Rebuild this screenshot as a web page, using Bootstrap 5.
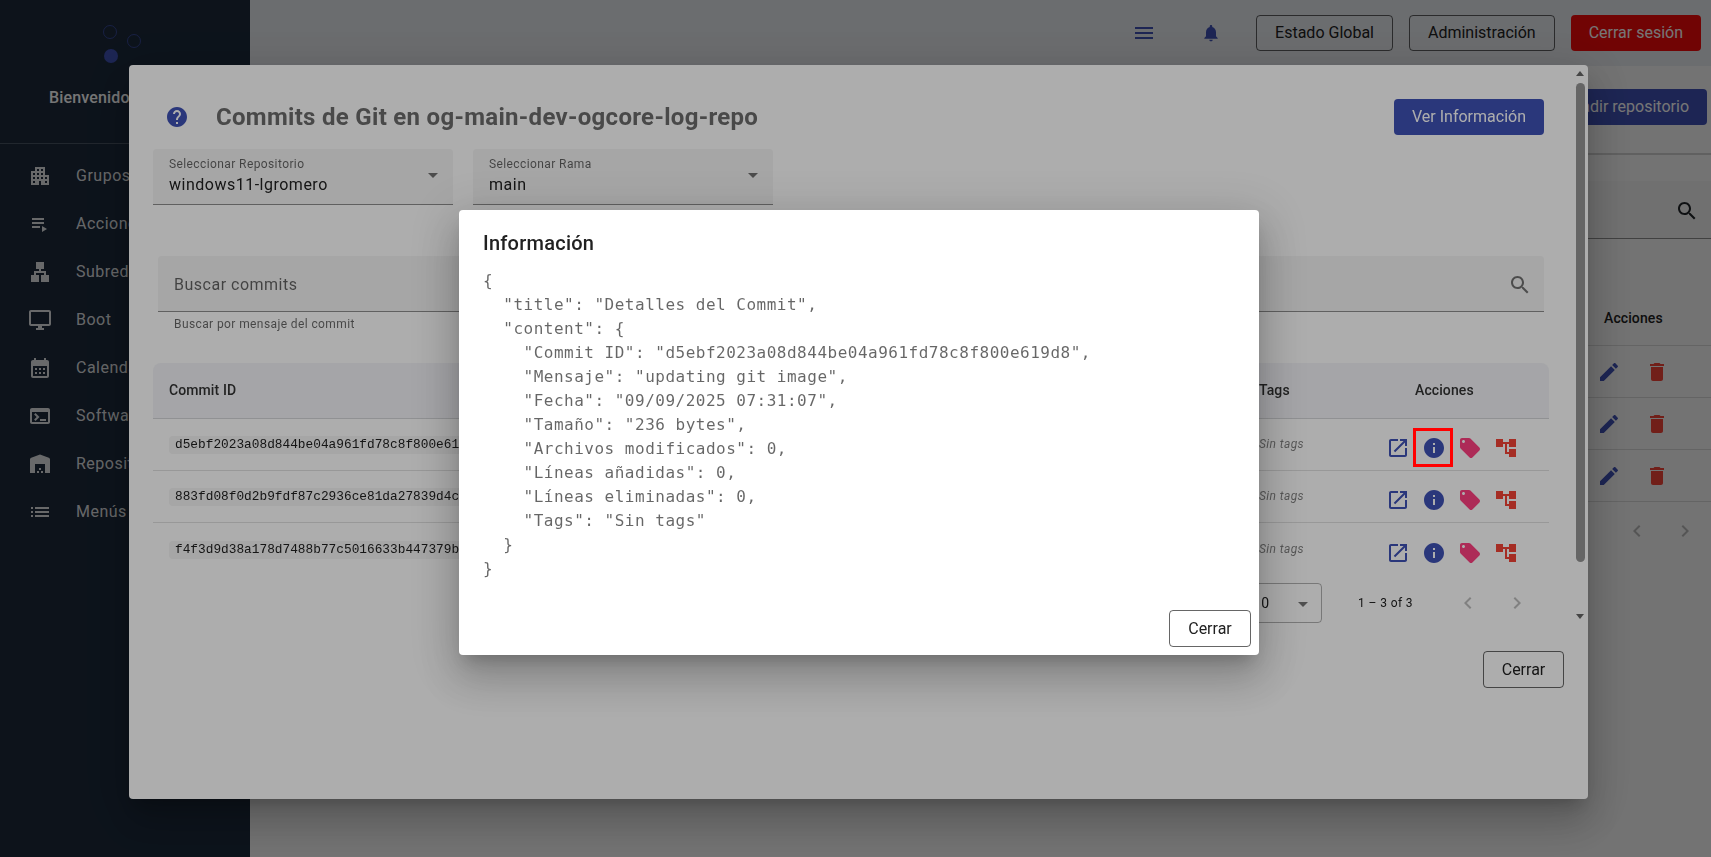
<!DOCTYPE html>
<html lang="es">
<head>
<meta charset="utf-8">
<title>Commits de Git</title>
<link href="https://cdn.jsdelivr.net/npm/bootstrap@5.3.0/dist/css/bootstrap.min.css" rel="stylesheet">
<style>
html,body{height:100%;overflow:hidden}
body{font-family:Roboto,"Liberation Sans",sans-serif;font-size:16px;letter-spacing:.5px;background:#f8f8f8;color:#212121}
.ico{width:24px;height:24px;fill:currentColor;flex:none;display:block}
.c-blue{color:#3f51b5}.c-pink{color:#ff4081}.c-red{color:#f44336}.c-mute{color:#00000042}.c-dim{color:#0000008a}
.shell{height:857px}
.side{width:250px;background:#1c2a3c;color:#fff;flex:none;overflow:hidden}
.side-head{height:144px;border-bottom:1px solid #ffffff33;position:relative;flex:none}
.logo{position:absolute;left:100px;top:22px}
.hello{position:absolute;left:49px;top:86px;font-weight:500;white-space:nowrap;font-size:16px;letter-spacing:.15px}
.side-item{height:48px;padding-left:28px;gap:24px;white-space:nowrap;color:#ffffffde}
.side-list{padding-top:8px}
.main-pane{min-width:0}
.topbar{height:66px;background:#e8ebf0;padding-right:10px;gap:16px}
.ico-menu{margin-right:29px}
.ico-bell{width:20px;height:20px;margin-right:19px}
.btn-m{font-size:16px;letter-spacing:0;height:36px;padding:0 18px;border-radius:4px;line-height:34px}
.btn-line{border:1px solid #00000099;color:#212121;background:transparent}
.btn-prim{background:#3f51b5;color:#fff;border:0}
.btn-danger-m{background:#f50a0a;color:#fff;border:0}
.bg-head{height:89px;border-bottom:2px solid #00000029;padding:0 4px 5px 0}
.bg-search{height:58px;margin-top:26px;border-bottom:1px solid #0000006b;background:#f3f3f3;padding:2px 12px 0 0}
.bg-table{margin-top:55px}
.bg-row{height:52px;border-bottom:1px solid #0000001f;padding-left:1347px}
.bg-head-row{font-weight:500;font-size:14px;letter-spacing:.1px;padding:0 0 2px 1354px}
.bg-act{width:72px;gap:24px}
.bg-pager{padding:17px 0 0 1375px;gap:24px}
.over1{z-index:1000;--bs-backdrop-opacity:.32;--bs-backdrop-bg:#000}
.over2{z-index:1020;--bs-backdrop-opacity:.32;--bs-backdrop-bg:#000}
.dlg{position:fixed;background:#fff;border-radius:4px;box-shadow:0 11px 15px -7px #0003,0 24px 38px 3px #00000024,0 9px 46px 8px #0000001f}
.dlg-commits{left:129px;top:65px;width:1459px;height:734px;z-index:1010}
.scroller{height:560px;overflow:hidden;padding:34px 44px 58px 24px}
.sb-track{position:absolute;right:0;top:0;width:15px;height:560px}
.sb-up,.sb-down{position:absolute;left:3px;border:4.500px solid transparent;border-top:0;border-bottom:5px solid #666}
.sb-up{top:6px}
.sb-down{top:549px;transform:rotate(180deg)}
.sb-thumb{position:absolute;left:3px;top:18px;width:9px;height:479px;border-radius:5px;background:#969696}
.ttl{font-size:24px;font-weight:700;letter-spacing:.3px;color:#6c6c6c;line-height:36px}
.ttl-ico{margin:0 27px 0 12px}
.selects{gap:20px;margin-top:14px}
.fake-sel{width:300px;height:56px;background:#f5f5f5;border-bottom:1px solid #0000006b;border-radius:4px 4px 0 0;padding:0 16px;position:relative}
.fake-sel label{font-size:12px;display:block;color:#0009;line-height:14px;padding-top:8px;letter-spacing:.4px}
.fake-sel div{line-height:24px;margin-top:2px}
.caret{position:absolute;right:15px;top:24px;border:5px solid transparent;border-top-color:#0000008a;border-bottom:0}
.search-wrap{margin:51px 0 0 5px}
.search-box{height:56px;background:#f5f5f5;border-bottom:1px solid #0000006b;border-radius:4px 4px 0 0;padding:2px 12px 0 16px}
.search-box input{border:0;outline:0;background:transparent;flex:1;padding:0;font-size:16px;letter-spacing:.5px;box-shadow:none}
.search-box input::placeholder{color:#0009;opacity:1}
.hint{font-size:12px;color:#0009;padding:5px 16px 0;line-height:15px;letter-spacing:.4px}
.tbl{table-layout:fixed;width:1396px;max-width:1396px;margin:31px 0 0;--bs-table-bg:transparent;border-collapse:separate;border-spacing:0}
.w1{width:352px}.w2{width:355px}.w3{width:190px}.w4{width:193px}.w5{width:130px}.w6{width:176px}
.tbl th{height:56px;background:#f3f4f8;font-size:14px;font-weight:500;letter-spacing:.1px;color:#333;vertical-align:middle;padding:0 16px 1px;border-bottom:1px solid #0000001f}
.tbl th:first-child{border-top-left-radius:8px}
.tbl th:last-child{border-top-right-radius:8px;padding-left:42px}
.tbl td{height:52px;padding:0 16px 2px;vertical-align:middle;font-size:14px;white-space:nowrap;border-bottom:1px solid #0000001f;letter-spacing:.1px}
.tbl tr:last-child td{border-bottom:0;height:53px}
.hash{font-family:"Liberation Mono",monospace;font-size:12.8px;letter-spacing:0;background:#f5f5f5;padding:0 6px;border-radius:4px;line-height:18px;display:inline-block;color:#212121}
.notags{font-size:12px;font-style:italic;color:#00000080;letter-spacing:.4px}
.act-cell{padding-left:7px!important}
.act-row{margin-top:8px}
.act-btn{width:36px;justify-content:center;display:flex}
.pager{height:40px;margin-top:7px;font-size:12px;padding-right:15px;letter-spacing:.4px}
.pg-sel{width:120px;height:40px;border:1px solid #0000004d;border-radius:4px;font-size:14px;position:relative;margin-right:36px}
.pg-sel span{position:absolute;left:50px}
.pg-sel .caret{right:13px;top:18px}
.pg-count{margin-right:43px}
.pg-nav{gap:25px}
.d1-foot{padding:26px 24px 0 0}
.btn-close-m{height:37px;width:81px;padding:0}
.over-top{position:fixed;z-index:1040}
.dlg-info{left:459px;top:210px;width:800px;height:445px;z-index:1030;padding:17px 8px 8px 24px}
.info-t{font-size:20px;font-weight:500;letter-spacing:.25px;line-height:32px;color:#212121;margin:0}
.info-pre{font-family:"DejaVu Sans Mono",monospace;font-size:16px;line-height:24px;letter-spacing:.5px;color:#0009;margin:10px 0 0;overflow:hidden;height:312px}
.info-foot{margin-top:29px}
.btn-close-i{height:37px;width:82px;padding:0}
.annot{left:1413px;top:428px;width:40px;height:39px;border:3px solid #f00}
</style>
</head>
<body>
<svg width="0" height="0" class="position-absolute">
<symbol id="i-apt" viewBox="0 0 24 24"><path d="M17 11V3H7v4H3v14h8v-4h2v4h8V11h-4zM7 19H5v-2h2v2zm0-4H5v-2h2v2zm0-4H5V9h2v2zm4 4H9v-2h2v2zm0-4H9V9h2v2zm0-4H9V5h2v2zm4 8h-2v-2h2v2zm0-4h-2V9h2v2zm0-4h-2V5h2v2zm4 12h-2v-2h2v2zm0-4h-2v-2h2v2z"/></symbol>
<symbol id="i-play" viewBox="0 0 24 24"><path d="M4 10h12v2H4zm0-4h12v2H4zm0 8h8v2H4zm10 0v6l5-3z"/></symbol>
<symbol id="i-lan" viewBox="0 0 24 24"><path d="M13 22h8v-7h-3v-4h-5V9h3V2H8v7h3v2H6v4H3v7h8v-7H8v-2h8v2h-3z"/></symbol>
<symbol id="i-desk" viewBox="0 0 24 24"><path d="M21 2H3c-1.1 0-2 .9-2 2v12c0 1.1.9 2 2 2h7v2H8v2h8v-2h-2v-2h7c1.1 0 2-.9 2-2V4c0-1.1-.9-2-2-2zm0 14H3V4h18v12z"/></symbol>
<symbol id="i-cal" viewBox="0 0 24 24"><path d="M19 4h-1V2h-2v2H8V2H6v2H5c-1.1 0-2 .9-2 2v14c0 1.1.9 2 2 2h14c1.1 0 2-.9 2-2V6c0-1.1-.9-2-2-2zm0 16H5V10h14v10zM9 14H7v-2h2v2zm4 0h-2v-2h2v2zm4 0h-2v-2h2v2zm-8 4H7v-2h2v2zm4 0h-2v-2h2v2zm4 0h-2v-2h2v2z"/></symbol>
<symbol id="i-term" viewBox="0 0 24 24"><path d="M20 4H4c-1.1 0-2 .9-2 2v12c0 1.1.9 2 2 2h16c1.1 0 2-.9 2-2V6c0-1.1-.9-2-2-2zm0 14H4V8h16v10zm-2-1h-6v-2h6v2zM7.5 17l-1.41-1.41L8.67 13l-2.59-2.59L7.5 9l4 4-4 4z"/></symbol>
<symbol id="i-ware" viewBox="0 0 24 24"><path d="M22 21V7.500C22 6.700 21.500 6 20.800 5.700L12 2.500 3.200 5.700C2.500 6 2 6.700 2 7.500V21h5v-9h10v9h5zm-11-2H9v2h2v-2zm2-3h-2v2h2v-2zm2 3h-2v2h2v-2z"/></symbol>
<symbol id="i-list" viewBox="0 0 24 24"><path d="M3 13h2v-2H3v2zm0 4h2v-2H3v2zm0-8h2V7H3v2zm4 4h14v-2H7v2zm0 4h14v-2H7v2zM7 7v2h14V7H7z"/></symbol>
<symbol id="i-menu" viewBox="0 0 24 24"><path d="M3 18h18v-2H3v2zm0-5h18v-2H3v2zm0-7v2h18V6H3z"/></symbol>
<symbol id="i-bell" viewBox="0 0 24 24"><path d="M12 22c1.100 0 2-.9 2-2h-4c0 1.100.89 2 2 2zm6-6v-5c0-3.070-1.640-5.640-4.500-6.320V4c0-.83-.67-1.500-1.500-1.500s-1.500.67-1.500 1.500v.68C7.630 5.360 6 7.920 6 11v5l-2 2v1h16v-1l-2-2z"/></symbol>
<symbol id="i-search" viewBox="0 0 24 24"><path d="M15.500 14h-.79l-.28-.27C15.410 12.590 16 11.110 16 9.500 16 5.910 13.090 3 9.500 3S3 5.910 3 9.500 5.910 16 9.500 16c1.610 0 3.090-.59 4.230-1.570l.27.28v.79l5 4.990L20.490 19l-4.990-5zm-6 0C7.010 14 5 11.990 5 9.500S7.010 5 9.500 5 14 7.010 14 9.500 11.990 14 9.500 14z"/></symbol>
<symbol id="i-help" viewBox="0 0 24 24"><path d="M12 2C6.480 2 2 6.480 2 12s4.480 10 10 10 10-4.480 10-10S17.520 2 12 2zm1 17h-2v-2h2v2zm2.070-7.750l-.9.92C13.450 12.900 13 13.500 13 15h-2v-.5c0-1.100.45-2.100 1.170-2.830l1.240-1.260c.37-.36.59-.86.59-1.410 0-1.100-.9-2-2-2s-2 .9-2 2H8c0-2.210 1.790-4 4-4s4 1.790 4 4c0 .88-.36 1.680-.93 2.250z"/></symbol>
<symbol id="i-open" viewBox="0 0 24 24"><path d="M19 19H5V5h7V3H5c-1.110 0-2 .9-2 2v14c0 1.100.89 2 2 2h14c1.100 0 2-.9 2-2v-7h-2v7zM14 3v2h3.590l-9.830 9.830 1.410 1.410L19 6.410V10h2V3h-7z"/></symbol>
<symbol id="i-info" viewBox="0 0 24 24"><path d="M12 2C6.480 2 2 6.480 2 12s4.480 10 10 10 10-4.480 10-10S17.520 2 12 2zm1 15h-2v-6h2v6zm0-8h-2V7h2v2z"/></symbol>
<symbol id="i-tag" viewBox="0 0 24 24"><path d="M21.410 11.580l-9-9C12.050 2.220 11.550 2 11 2H4c-1.100 0-2 .9-2 2v7c0 .55.22 1.050.59 1.420l9 9c.36.36.86.58 1.410.58.55 0 1.050-.22 1.410-.59l7-7c.37-.36.59-.86.59-1.410 0-.55-.23-1.060-.59-1.420zM5.500 7C4.670 7 4 6.330 4 5.500S4.670 4 5.500 4 7 4.670 7 5.500 6.330 7 5.500 7z"/></symbol>
<symbol id="i-tree" viewBox="0 0 24 24"><path d="M22 11V3h-7v3H9V3H2v8h7V8h2v10h4v3h7v-8h-7v3h-2V8h2v3z"/></symbol>
<symbol id="i-edit" viewBox="0 0 24 24"><path d="M3 17.250V21h3.750L17.810 9.940l-3.750-3.750L3 17.250zM20.710 7.040c.39-.39.39-1.020 0-1.410l-2.340-2.340c-.39-.39-1.020-.39-1.410 0l-1.830 1.830 3.750 3.750 1.830-1.830z"/></symbol>
<symbol id="i-del" viewBox="0 0 24 24"><path d="M6 19c0 1.100.9 2 2 2h8c1.100 0 2-.9 2-2V7H6v12zM19 4h-3.500l-1-1h-5l-1 1H5v2h14V4z"/></symbol>
<symbol id="i-left" viewBox="0 0 24 24"><path d="M15.410 7.410L14 6l-6 6 6 6 1.410-1.410L10.830 12z"/></symbol>
<symbol id="i-right" viewBox="0 0 24 24"><path d="M10 6L8.590 7.410 13.170 12l-4.580 4.590L10 18l6-6z"/></symbol>
</svg>

<div class="shell d-flex">
  <aside class="side d-flex flex-column">
    <div class="side-head">
      <svg class="logo" width="46" height="50" viewBox="0 0 46 50"><circle cx="10" cy="10" r="6.500" fill="none" stroke="#3f51b5" stroke-opacity=".7"/><circle cx="34" cy="19" r="6.500" fill="none" stroke="#3f51b5" stroke-opacity=".7"/><circle cx="11" cy="34" r="7" fill="#3f51b5"/></svg>
      <div class="hello">Bienvenido</div>
    </div>
    <nav class="side-list">
      <div class="side-item d-flex align-items-center"><svg class="ico"><use href="#i-apt"/></svg>Grupos</div>
      <div class="side-item d-flex align-items-center"><svg class="ico"><use href="#i-play"/></svg>Acciones</div>
      <div class="side-item d-flex align-items-center"><svg class="ico"><use href="#i-lan"/></svg>Subredes</div>
      <div class="side-item d-flex align-items-center"><svg class="ico"><use href="#i-desk"/></svg>Boot</div>
      <div class="side-item d-flex align-items-center"><svg class="ico"><use href="#i-cal"/></svg>Calendario</div>
      <div class="side-item d-flex align-items-center"><svg class="ico"><use href="#i-term"/></svg>Software</div>
      <div class="side-item d-flex align-items-center"><svg class="ico"><use href="#i-ware"/></svg>Repositorios</div>
      <div class="side-item d-flex align-items-center"><svg class="ico"><use href="#i-list"/></svg>Menús</div>
    </nav>
  </aside>
  <main class="main-pane flex-grow-1">
    <header class="topbar d-flex align-items-center justify-content-end">
      <svg class="ico c-blue ico-menu"><use href="#i-menu"/></svg>
      <svg class="ico c-blue ico-bell"><use href="#i-bell"/></svg>
      <button class="btn btn-m btn-line">Estado Global</button>
      <button class="btn btn-m btn-line">Administración</button>
      <button class="btn btn-m btn-danger-m">Cerrar sesión</button>
    </header>
    <div class="bg-head d-flex align-items-center justify-content-end">
      <button class="btn btn-m btn-prim">Añadir repositorio</button>
    </div>
    <div class="bg-search d-flex align-items-center justify-content-end"><svg class="ico text-dark"><use href="#i-search"/></svg></div>
    <div class="bg-table">
      <div class="bg-row bg-head-row d-flex align-items-center">Acciones</div>
      <div class="bg-row d-flex align-items-center"><div class="bg-act d-flex"><svg class="ico c-blue"><use href="#i-edit"/></svg><svg class="ico c-red"><use href="#i-del"/></svg></div></div>
      <div class="bg-row d-flex align-items-center"><div class="bg-act d-flex"><svg class="ico c-blue"><use href="#i-edit"/></svg><svg class="ico c-red"><use href="#i-del"/></svg></div></div>
      <div class="bg-row d-flex align-items-center"><div class="bg-act d-flex"><svg class="ico c-blue"><use href="#i-edit"/></svg><svg class="ico c-red"><use href="#i-del"/></svg></div></div>
      <div class="bg-pager d-flex"><svg class="ico c-mute"><use href="#i-left"/></svg><svg class="ico c-mute"><use href="#i-right"/></svg></div>
    </div>
  </main>
</div>

<div class="modal-backdrop show over1"></div>

<section class="dlg dlg-commits d-flex flex-column">
  <div class="scroller">
    <div class="d-flex align-items-center justify-content-between">
      <div class="d-flex align-items-center">
        <svg class="ico c-blue ttl-ico"><use href="#i-help"/></svg>
        <h2 class="ttl m-0">Commits de Git en og-main-dev-ogcore-log-repo</h2>
      </div>
      <button class="btn btn-m btn-prim">Ver Información</button>
    </div>
    <div class="selects d-flex">
      <div class="fake-sel"><label>Seleccionar Repositorio</label><div>windows11-lgromero</div><i class="caret"></i></div>
      <div class="fake-sel"><label>Seleccionar Rama</label><div>main</div><i class="caret"></i></div>
    </div>
    <div class="search-wrap">
      <div class="search-box d-flex align-items-center">
        <input class="form-control" placeholder="Buscar commits">
        <svg class="ico c-dim"><use href="#i-search"/></svg>
      </div>
      <div class="hint">Buscar por mensaje del commit</div>
    </div>
    <table class="table tbl">
      <colgroup><col class="w1"><col class="w2"><col class="w3"><col class="w4"><col class="w5"><col class="w6"></colgroup>
      <thead><tr><th>Commit ID</th><th></th><th></th><th></th><th>Tags</th><th>Acciones</th></tr></thead>
      <tbody>
        <tr><td><span class="hash">d5ebf2023a08d844be04a961fd78c8f800e619d8</span></td><td></td><td></td><td></td><td><span class="notags">Sin tags</span></td>
          <td class="act-cell"><div class="act-row d-flex"><span class="act-btn c-blue"><svg class="ico"><use href="#i-open"/></svg></span><span class="act-btn c-blue"><svg class="ico"><use href="#i-info"/></svg></span><span class="act-btn c-pink"><svg class="ico"><use href="#i-tag"/></svg></span><span class="act-btn c-red"><svg class="ico"><use href="#i-tree"/></svg></span></div></td></tr>
        <tr><td><span class="hash">883fd08f0d2b9fdf87c2936ce81da27839d4c1a2</span></td><td></td><td></td><td></td><td><span class="notags">Sin tags</span></td>
          <td class="act-cell"><div class="act-row d-flex"><span class="act-btn c-blue"><svg class="ico"><use href="#i-open"/></svg></span><span class="act-btn c-blue"><svg class="ico"><use href="#i-info"/></svg></span><span class="act-btn c-pink"><svg class="ico"><use href="#i-tag"/></svg></span><span class="act-btn c-red"><svg class="ico"><use href="#i-tree"/></svg></span></div></td></tr>
        <tr><td><span class="hash">f4f3d9d38a178d7488b77c5016633b447379b0e2</span></td><td></td><td></td><td></td><td><span class="notags">Sin tags</span></td>
          <td class="act-cell"><div class="act-row d-flex"><span class="act-btn c-blue"><svg class="ico"><use href="#i-open"/></svg></span><span class="act-btn c-blue"><svg class="ico"><use href="#i-info"/></svg></span><span class="act-btn c-pink"><svg class="ico"><use href="#i-tag"/></svg></span><span class="act-btn c-red"><svg class="ico"><use href="#i-tree"/></svg></span></div></td></tr>
      </tbody>
    </table>
    <div class="pager d-flex align-items-center justify-content-end">
      <div class="pg-sel d-flex align-items-center"><span>10</span><i class="caret"></i></div>
      <div class="pg-count">1 – 3 of 3</div>
      <div class="pg-nav d-flex"><svg class="ico c-mute"><use href="#i-left"/></svg><svg class="ico c-mute"><use href="#i-right"/></svg></div>
    </div>
  </div>
  <div class="sb-track"><i class="sb-up"></i><i class="sb-thumb"></i><i class="sb-down"></i></div>
  <div class="d1-foot d-flex justify-content-end"><button class="btn btn-m btn-line btn-close-m">Cerrar</button></div>
</section>

<div class="modal-backdrop show over2"></div>

<section class="dlg dlg-info">
  <h2 class="info-t">Información</h2>
  <pre class="info-pre">{
  "title": "Detalles del Commit",
  "content": {
    "Commit ID": "d5ebf2023a08d844be04a961fd78c8f800e619d8",
    "Mensaje": "updating git image",
    "Fecha": "09/09/2025 07:31:07",
    "Tamaño": "236 bytes",
    "Archivos modificados": 0,
    "Líneas añadidas": 0,
    "Líneas eliminadas": 0,
    "Tags": "Sin tags"
  }
}</pre>
  <div class="info-foot d-flex justify-content-end"><button class="btn btn-m btn-line btn-close-i">Cerrar</button></div>
</section>

<div class="over-top annot"></div>
</body>
</html>
